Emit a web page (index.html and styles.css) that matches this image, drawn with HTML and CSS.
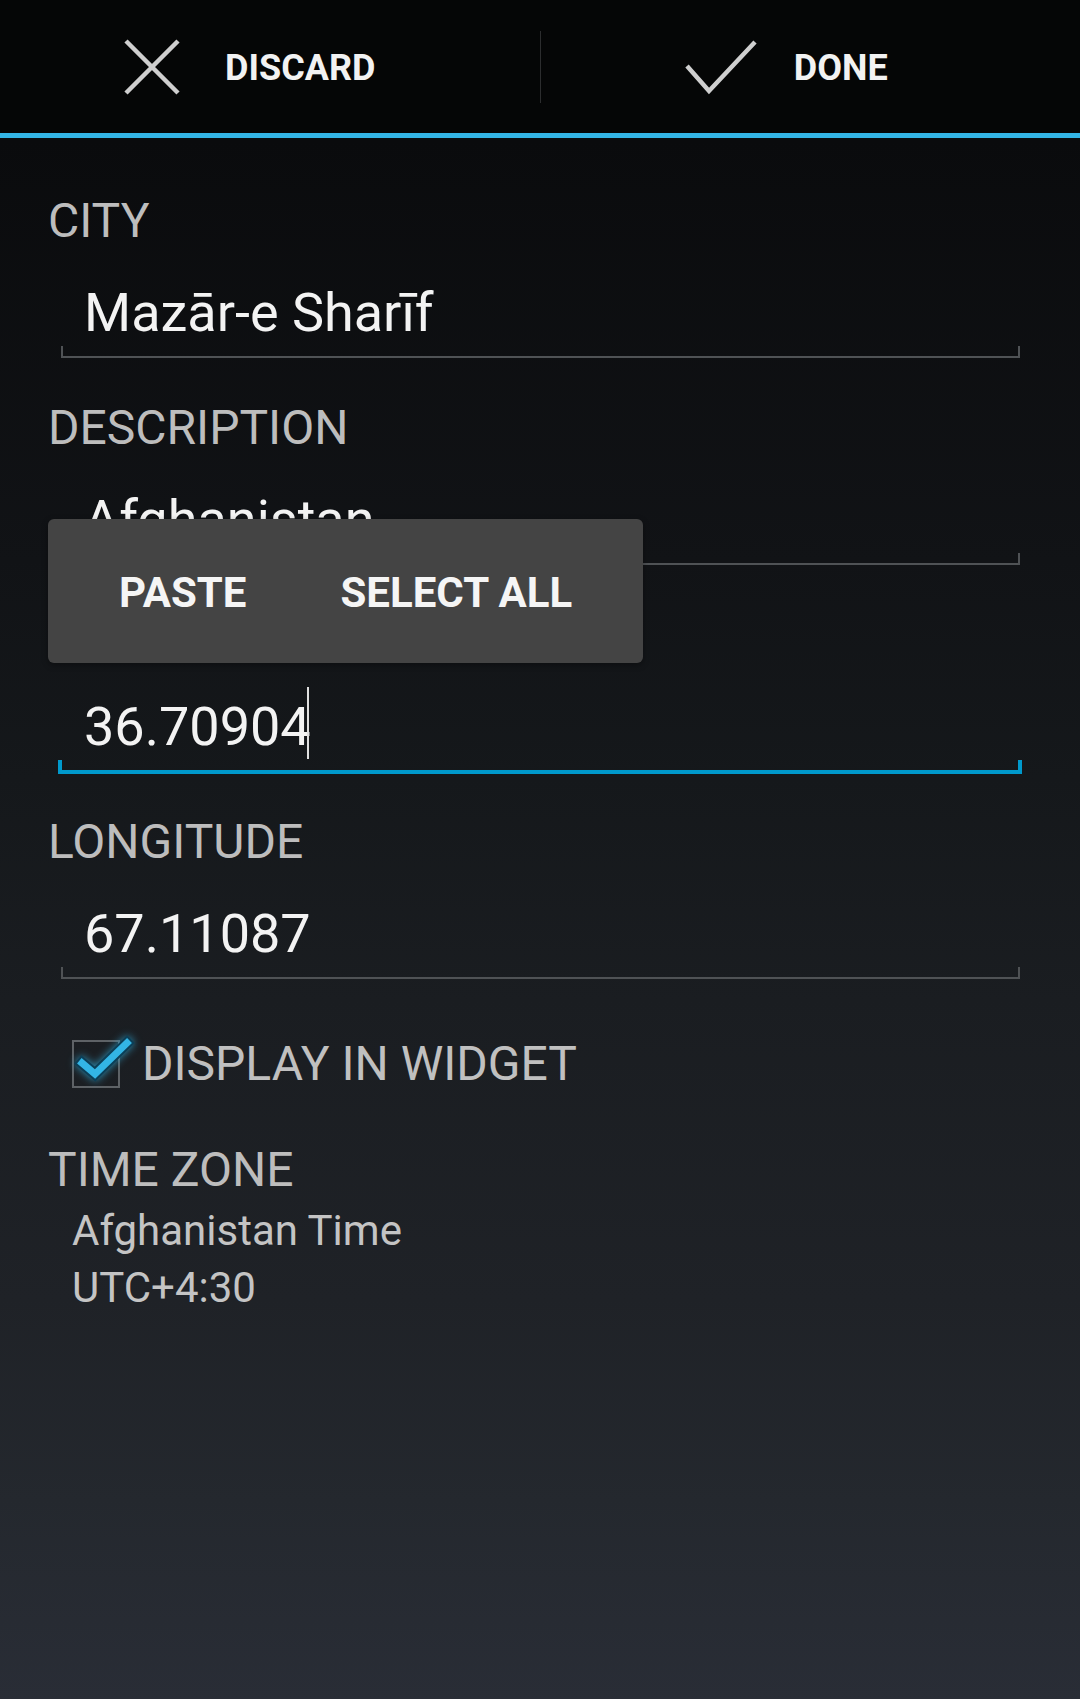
FILE: index.html
```html
<!DOCTYPE html>
<html lang="en">
<head>
<meta charset="utf-8">
<title>Edit city</title>
<link rel="stylesheet" href="styles.css">
</head>
<body>
<div class="app">
  <header class="actionbar">
    <div class="ab-btn">
      <svg class="ab-icon" width="72" height="72" viewBox="0 0 72 72" aria-hidden="true">
        <path d="M10 10 L62 62 M10 62 L62 10" fill="none" stroke="#cfcfcf" stroke-width="4.5"/>
      </svg>
      <span class="ab-text">DISCARD</span>
    </div>
    <div class="ab-divider"></div>
    <div class="ab-btn">
      <svg class="ab-icon" width="72" height="72" viewBox="0 0 72 72" aria-hidden="true">
        <path d="M2 35 L24 60 L70 11" fill="none" stroke="#cfcfcf" stroke-width="4.5" stroke-linejoin="miter"/>
      </svg>
      <span class="ab-text">DONE</span>
    </div>
  </header>

  <main class="form">
    <div class="field">
      <div class="label">CITY</div>
      <div class="input"><span class="value">Mazār-e Sharīf</span></div>
    </div>
    <div class="field">
      <div class="label">DESCRIPTION</div>
      <div class="input"><span class="value">Afghanistan</span></div>
    </div>
    <div class="field focused">
      <div class="label">LATITUDE</div>
      <div class="input"><span class="value">36.70904<span class="caret"></span></span></div>
    </div>
    <div class="field">
      <div class="label">LONGITUDE</div>
      <div class="input"><span class="value">67.11087</span></div>
    </div>

    <div class="check-row">
      <span class="checkbox">
        <svg class="checkmark" width="64" height="48" viewBox="0 0 64 48" aria-hidden="true">
          <path d="M10 23 L23 34 L55 3" fill="none" stroke="#0c3f57" stroke-width="11" stroke-linejoin="miter" stroke-linecap="square"/>
          <path d="M10 23 L23 34 L55 3" fill="none" stroke="#33b5e5" stroke-width="7" stroke-linejoin="miter" stroke-linecap="square"/>
        </svg>
      </span>
      <span class="check-label">DISPLAY IN WIDGET</span>
    </div>

    <div class="tz">
      <div class="label">TIME ZONE</div>
      <div class="tz-lines">
        <div class="tz-line">Afghanistan Time</div>
        <div class="tz-line">UTC+4:30</div>
      </div>
    </div>
  </main>

  <div class="popup">
    <span class="popup-item">PASTE</span>
    <span class="popup-item">SELECT ALL</span>
  </div>
</div>
</body>
</html>
```

FILE: styles.css
```css
* {
  box-sizing: border-box;
}

html, body {
  margin: 0;
  padding: 0;
}

body {
  font-family: Roboto, "Liberation Sans", sans-serif;
  background: #000;
}

.app {
  position: relative;
  width: 1080px;
  height: 1699px;
  overflow: hidden;
  background: linear-gradient(to bottom,
    #08090a 0px,
    #0a0b0d 140px,
    #111316 560px,
    #15181b 780px,
    #1a1d21 1000px,
    #1f2227 1300px,
    #24282e 1500px,
    #292d36 1699px);
}

/* ---------- action bar ---------- */
.actionbar {
  height: 138px;
  background: #050606;
  border-bottom: 5px solid #33b5e5;
  display: flex;
  align-items: center;
}

.ab-btn {
  flex: 1;
  height: 100%;
  display: flex;
  align-items: center;
  justify-content: center;
  padding-right: 48px;
}

.ab-icon {
  display: block;
  flex: none;
  margin-right: 37px;
}

.ab-text {
  font-size: 36px;
  font-weight: 700;
  color: #f2f2f2;
  line-height: 40px;
  padding-top: 3px;
}

.ab-divider {
  width: 1px;
  height: 72px;
  background: #2c2d2e;
  flex: none;
}

/* ---------- form ---------- */
.form {
  padding-top: 55px;
}

.field {
  margin-bottom: 42px;
}

.field.focused {
  margin-bottom: 40px;
}

.label {
  font-size: 48px;
  line-height: 56px;
  color: #bdbdbd;
  padding-left: 48px;
}

.input {
  position: relative;
  margin: 32px 60px 0 61px;
  padding: 0 0 11px 23px;
  border-bottom: 2px solid #4f5255;
  height: 77px;
}

.input::before,
.input::after {
  content: "";
  position: absolute;
  bottom: -2px;
  width: 2px;
  height: 12px;
  background: #4f5255;
}

.input::before {
  left: 0;
}

.input::after {
  right: 0;
}

.field.focused .input {
  margin-left: 58px;
  margin-right: 58px;
  padding-left: 26px;
  border-bottom: 4px solid #0099cc;
  height: 79px;
}

.field.focused .input::before,
.field.focused .input::after {
  bottom: -4px;
  width: 4px;
  height: 14px;
  background: #0099cc;
}

.value {
  font-size: 54px;
  line-height: 64px;
  color: #f3f3f3;
  display: block;
}

.caret {
  border-left: 2px solid #e0e0e0;
  padding-top: 8px;
  padding-bottom: 1px;
  margin-left: -4px;
}

/* ---------- checkbox ---------- */
.check-row {
  display: flex;
  align-items: center;
  margin-top: 57px;
  padding-left: 72px;
  height: 56px;
}

.checkbox {
  position: relative;
  width: 48px;
  height: 48px;
  border: 2px solid #5e6266;
  flex: none;
  margin-right: 22px;
}

.checkmark {
  position: absolute;
  left: -2px;
  top: -2px;
  overflow: visible;
  filter: drop-shadow(0 0 4px rgba(51, 181, 229, 0.75));
}

.check-label {
  font-size: 48px;
  line-height: 56px;
  color: #c0c0c0;
}

/* ---------- time zone ---------- */
.tz {
  margin-top: 50px;
}

.tz-lines {
  margin-top: 4px;
  padding-left: 72px;
}

.tz-line {
  font-size: 42px;
  line-height: 57px;
  color: #c4c4c4;
}

/* ---------- floating text-selection popup ---------- */
.popup {
  position: absolute;
  left: 48px;
  top: 519px;
  height: 144px;
  padding: 0 24px;
  display: flex;
  align-items: center;
  background: #444444;
  border-radius: 6px;
  box-shadow: 0 2px 6px rgba(0, 0, 0, 0.35);
}

.popup-item {
  padding: 4px 47px 0;
  font-size: 42px;
  font-weight: 700;
  color: #f5f5f5;
  line-height: 48px;
}
```
